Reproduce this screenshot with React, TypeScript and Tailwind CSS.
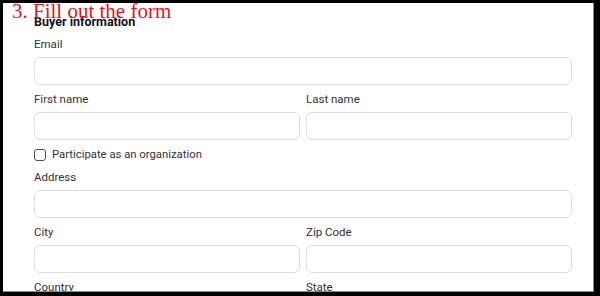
import React from 'react';

const labelCls = "block h-4 leading-4 text-[11.5px] text-[#333]";
const inputCls = "mt-[5px] h-[28px] w-full rounded-[6px] border border-[#dedede] bg-white";

const Field: React.FC<{ label: string }> = ({ label }) => (
  <div className="flex flex-col">
    <span className={labelCls}>{label}</span>
    <div className={inputCls} />
  </div>
);

const App: React.FC = () => {
  return (
    <div className="relative w-[600px] h-[296px] bg-black pt-[3px] pl-[3px] pr-[6px] pb-[4px] overflow-hidden" style={{ fontFamily: 'Roboto, "Liberation Sans", sans-serif' }}>
      <div className="w-full h-full bg-white border-r border-b border-[#8a8a8a] overflow-hidden">
        <div className="ml-[31px] w-[538px] pt-[11px] flex flex-col gap-[6px]">
          <h3 className="h-4 leading-4 text-[12.5px] font-bold text-[#111]">Buyer information</h3>

          <Field label="Email" />

          <div className="grid grid-cols-2 gap-[6px]">
            <Field label="First name" />
            <Field label="Last name" />
          </div>

          <label className="flex items-center gap-[6px] h-4 mt-[1px]">
            <span className="w-3 h-3 rounded-[3px] border border-[#555] bg-white" />
            <span className="text-[11.3px] text-[#333]">Participate as an organization</span>
          </label>

          <Field label="Address" />

          <div className="grid grid-cols-2 gap-[6px]">
            <Field label="City" />
            <Field label="Zip Code" />
          </div>

          <div className="grid grid-cols-2 gap-[6px]">
            <Field label="Country" />
            <Field label="State" />
          </div>
        </div>
      </div>

      {/* annotation over the screenshot */}
      <span className="absolute left-[12px] top-[1px] text-[21px] leading-[21px] text-[#e8141b] whitespace-nowrap" style={{ fontFamily: '"Liberation Serif", "Times New Roman", serif' }}>
        3. Fill out the form
      </span>
    </div>
  );
};

export default App;
